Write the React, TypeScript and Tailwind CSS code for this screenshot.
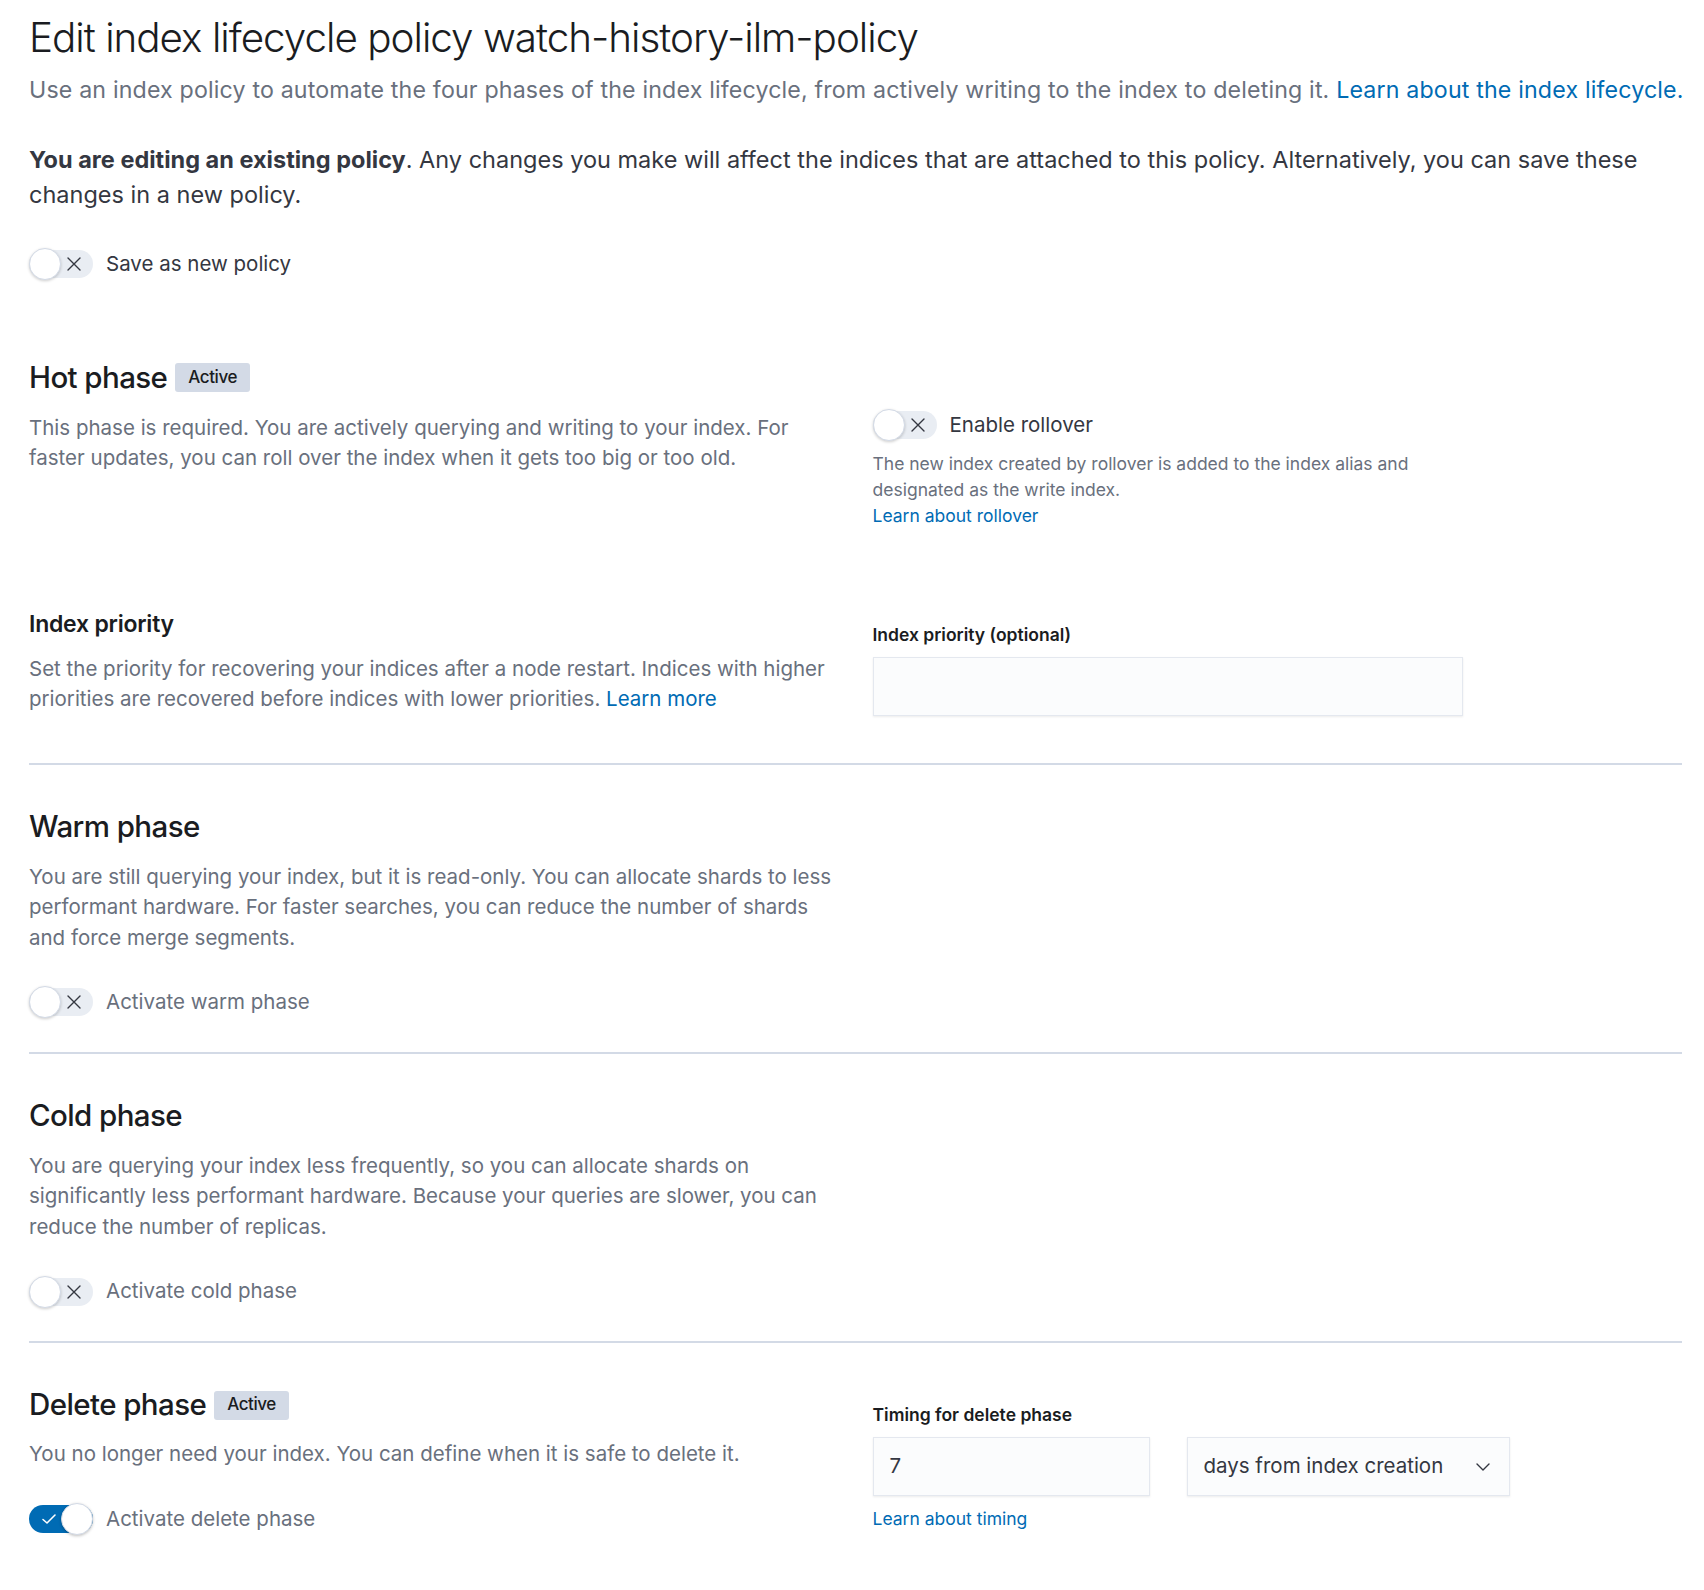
import React from 'react';

const Toggle = ({ on = false }: { on?: boolean }) => (
    <span className={`relative inline-flex items-center w-[64px] h-[28px] rounded-full shrink-0 ${on ? 'bg-[#006bb4]' : 'bg-[#e9edf3]'}`}>
        {on ? (
            <>
                <svg className="absolute left-[12px] top-[8px]" width="16" height="12" viewBox="0 0 16 12" fill="none">
                    <path d="M2 6.5 L6 10 L14 2" stroke="white" strokeWidth="1.6" strokeLinecap="round" strokeLinejoin="round" />
                </svg>
                <span className="absolute right-0 top-[-2px] w-[32px] h-[32px] rounded-full bg-white border border-[#d3dae6] shadow-[0_1px_3px_rgba(0,0,0,0.25)]" />
            </>
        ) : (
            <>
                <span className="absolute left-0 top-[-2px] w-[32px] h-[32px] rounded-full bg-white border border-[#d3dae6] shadow-[0_1px_3px_rgba(0,0,0,0.2)]" />
                <svg className="absolute left-[37px] top-[6px]" width="16" height="16" viewBox="0 0 16 16" fill="none">
                    <path d="M2 2 L14 14 M14 2 L2 14" stroke="#343741" strokeWidth="1.4" strokeLinecap="round" />
                </svg>
            </>
        )}
    </span>
);

const SwitchRow = ({ label, on, dark, className = '' }: { label: string; on?: boolean; dark?: boolean; className?: string }) => (
    <div className={`flex items-center gap-[13px] ${className}`}>
        <Toggle on={on} />
        <span className={`text-[20.5px] ${dark ? 'text-[#343741]' : 'text-[#69707d]'}`}>{label}</span>
    </div>
);

const Badge = ({ children }: { children: React.ReactNode }) => (
    <span className="inline-flex items-center h-[29px] px-[13px] rounded-[3px] bg-[#d3dae6] text-[17px] font-medium text-[#1a1c21] tracking-tight">
        {children}
    </span>
);

const PhaseTitle = ({ title, active }: { title: string; active?: boolean }) => (
    <div className="flex items-center gap-[8px] h-[30px]">
        <h2 className="text-[29.5px] font-medium text-[#1a1c21] tracking-[-0.02em] leading-none">{title}</h2>
        {active && <Badge>Active</Badge>}
    </div>
);

const Desc = ({ children, className = '' }: { children: React.ReactNode; className?: string }) => (
    <p className={`text-[20.5px] leading-[30.5px] text-[#69707d] ${className}`}>{children}</p>
);

const Divider = () => <hr className="border-0 h-[2px] bg-[#d3dae6] my-0" />;

export default function App() {
    return (
        <div className="bg-white min-h-[1590px] font-['Inter',sans-serif] pl-[29px] pt-[10px] pr-[22px]">
            <h1 className="text-[40.4px] font-light text-[#1a1c21] tracking-[-0.025em] leading-[56px]">
                Edit index lifecycle policy watch-history-ilm-policy
            </h1>
            <p className="text-[23.2px] text-[#69707d] mt-[9px] leading-[30px] tracking-[0.007em] whitespace-nowrap">
                Use an index policy to automate the four phases of the index lifecycle, from actively writing to the index to deleting it.{' '}
                <a className="text-[#006bb4]">Learn about the index lifecycle.</a>
            </p>

            <p className="text-[23.5px] text-[#343741] leading-[35px] mt-[37px]">
                <strong className="font-bold">You are editing an existing policy</strong>. Any changes you make will affect the indices that are attached to this policy. Alternatively, you can save these changes in a new policy.
            </p>

            <SwitchRow label="Save as new policy" dark className="mt-[37px]" />

            {/* Hot phase */}
            <div className="mt-[83px] grid grid-cols-2 gap-x-[34px]">
                <div>
                    <PhaseTitle title="Hot phase" active />
                    <Desc className="mt-[20px]">
                        This phase is required. You are actively querying and writing to your index. For faster updates, you can roll over the index when it gets too big or too old.
                    </Desc>
                </div>
                <div className="pt-[47px]">
                    <SwitchRow label="Enable rollover" dark />
                    <p className="mt-[10px] text-[17.5px] leading-[26px] text-[#69707d] w-[560px]">
                        The new index created by rollover is added to the index alias and designated as the write index.
                    </p>
                    <a className="block text-[17.5px] leading-[26px] text-[#006bb4]">Learn about rollover</a>
                </div>
            </div>

            {/* Index priority */}
            <div className="mt-[80px] grid grid-cols-2 gap-x-[34px]">
                <div>
                    <h3 className="text-[23px] font-semibold text-[#1a1c21] tracking-[-0.01em] leading-[30px]">Index priority</h3>
                    <Desc className="mt-[15px]">
                        Set the priority for recovering your indices after a node restart. Indices with higher priorities are recovered before indices with lower priorities.{' '}
                        <a className="text-[#006bb4]">Learn more</a>
                    </Desc>
                </div>
                <div>
                    <label className="block text-[17.5px] font-semibold text-[#1a1c21] leading-[20px] mt-[16px]">Index priority (optional)</label>
                    <div className="mt-[12px] w-[590px] h-[59px] bg-[#fbfcfd] border border-[#e4e8ef] shadow-[0_1px_2px_rgba(0,0,0,0.08)]" />
                </div>
            </div>

            <div className="mt-[47px]">
                <Divider />
            </div>

            {/* Warm phase */}
            <div className="pt-[47px] pb-[34px]">
                <PhaseTitle title="Warm phase" />
                <Desc className="mt-[20px] w-[811px]">
                    You are still querying your index, but it is read-only. You can allocate shards to less performant hardware. For faster searches, you can reduce the number of shards and force merge segments.
                </Desc>
                <SwitchRow label="Activate warm phase" className="mt-[34px]" />
            </div>
            <Divider />

            {/* Cold phase */}
            <div className="pt-[47px] pb-[34px]">
                <PhaseTitle title="Cold phase" />
                <Desc className="mt-[20px] w-[811px]">
                    You are querying your index less frequently, so you can allocate shards on significantly less performant hardware. Because your queries are slower, you can reduce the number of replicas.
                </Desc>
                <SwitchRow label="Activate cold phase" className="mt-[34px]" />
            </div>
            <Divider />

            {/* Delete phase */}
            <div className="pt-[47px] grid grid-cols-2 gap-x-[34px]">
                <div>
                    <PhaseTitle title="Delete phase" active />
                    <Desc className="mt-[19px]">
                        You no longer need your index. You can define when it is safe to delete it.
                    </Desc>
                    <SwitchRow label="Activate delete phase" on className="mt-[34px]" />
                </div>
                <div>
                    <label className="block text-[17.5px] font-semibold text-[#1a1c21] leading-[20px] mt-[15px]">Timing for delete phase</label>
                    <div className="mt-[12px] flex items-center gap-[37px]">
                        <div className="w-[277px] h-[59px] bg-[#fbfcfd] border border-[#e4e8ef] shadow-[0_1px_2px_rgba(0,0,0,0.08)] flex items-center px-[16px] text-[20.5px] text-[#343741]">
                            7
                        </div>
                        <div className="w-[323px] h-[59px] bg-[#fbfcfd] border border-[#e4e8ef] shadow-[0_1px_2px_rgba(0,0,0,0.08)] flex items-center justify-between pl-[16px] pr-[18px] text-[20.5px] text-[#343741]">
                            <span>days from index creation</span>
                            <svg width="16" height="16" viewBox="0 0 16 16" fill="none">
                                <path d="M2 5 L8 11 L14 5" stroke="#343741" strokeWidth="1.4" strokeLinecap="round" strokeLinejoin="round" />
                            </svg>
                        </div>
                    </div>
                    <a className="block mt-[11px] text-[17.5px] leading-[24px] text-[#006bb4]">Learn about timing</a>
                </div>
            </div>
        </div>
    );
}
